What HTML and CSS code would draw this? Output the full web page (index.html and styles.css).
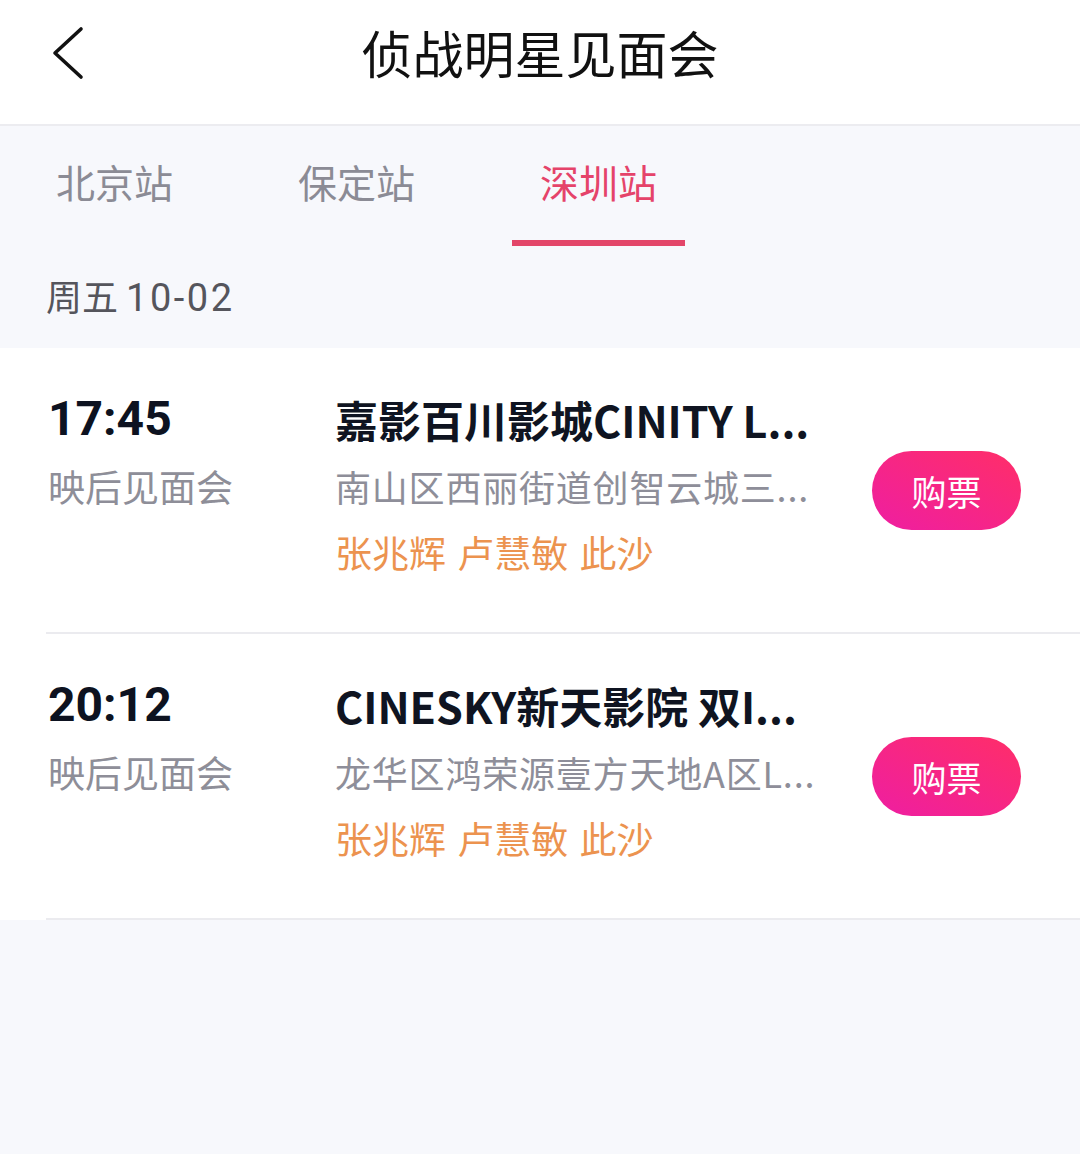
FILE: index.html
```html
<!DOCTYPE html>
<html lang="zh-CN">
<head>
<meta charset="utf-8">
<title>侦战明星见面会</title>
<link rel="stylesheet" href="styles.css">
</head>
<body>
<header class="header">
  <span class="back">
    <svg width="40" height="56" viewBox="0 0 40 56"><polyline points="31,3 5,27 31,51" fill="none" stroke="#111" stroke-width="3.6" stroke-linecap="round" stroke-linejoin="round"/></svg>
  </span>
  <h1 class="title">侦战明星见面会</h1>
</header>
<section class="top">
  <nav class="tabs">
    <div class="tab"><span class="tab-text">北京站</span><span class="tab-bar"></span></div>
    <div class="tab"><span class="tab-text">保定站</span><span class="tab-bar"></span></div>
    <div class="tab active"><span class="tab-text">深圳站</span><span class="tab-bar"></span></div>
  </nav>
  <div class="date">周五 <span class="date-num">10-02</span></div>
</section>
<main class="list">
  <div class="row">
    <div class="left">
      <div class="time">17:45</div>
      <div class="kind">映后见面会</div>
    </div>
    <div class="info">
      <div class="name">嘉影百川影城CINITY L...</div>
      <div class="addr">南山区西丽街道创智云城三...</div>
      <div class="stars">张兆辉 卢慧敏 此沙</div>
    </div>
    <div class="btn">购票</div>
  </div>
  <div class="row">
    <div class="left">
      <div class="time">20:12</div>
      <div class="kind">映后见面会</div>
    </div>
    <div class="info">
      <div class="name">CINESKY新天影院 双I...</div>
      <div class="addr">龙华区鸿荣源壹方天地A区L...</div>
      <div class="stars">张兆辉 卢慧敏 此沙</div>
    </div>
    <div class="btn">购票</div>
  </div>
</main>
</body>
</html>
```
FILE: styles.css
```css
* { box-sizing: border-box; }
html, body {
  margin: 0;
  padding: 0;
  background: #f7f8fc;
  font-family: "Noto Sans CJK SC", "Noto Sans", sans-serif;
}
body { width: 1080px; min-height: 1154px; }

.header {
  position: relative;
  background: #fff;
  height: 126px;
  padding-bottom: 18px;
  border-bottom: 2px solid #ececf0;
}
.back {
  position: absolute;
  left: 50px;
  top: 26px;
  width: 40px;
  height: 56px;
  display: block;
}
.back svg { display: block; }
.title {
  margin: 0;
  text-align: center;
  font-size: 51px;
  font-weight: 400;
  line-height: 104px;
  color: #111;
}

.top {
  padding: 15px 0 22px 0;
}
.tabs {
  display: flex;
  gap: 69px;
  padding-left: 28px;
}
.tab {
  width: 173px;
  display: flex;
  flex-direction: column;
  align-items: center;
}
.tab-text {
  font-size: 39px;
  line-height: 80px;
  color: #8b8b95;
}
.tab-bar {
  display: block;
  width: 173px;
  height: 6px;
  margin-top: 19px;
  background: transparent;
}
.tab.active .tab-text { color: #e5436a; }
.tab.active .tab-bar { background: #e34669; }

.date {
  margin-top: 20px;
  padding-left: 46px;
  height: 60px;
  font-size: 36px;
  line-height: 58px;
  color: #55555c;
}
.date-num {
  font-family: Roboto, "Noto Sans", sans-serif;
  font-size: 38px;
  line-height: 1;
  letter-spacing: 2.5px;
}

.list {
  background: #fff;
}
.row {
  display: flex;
  margin-left: 46px;
  padding: 37px 0 47px 2px;
  border-bottom: 2px solid #ebebef;
}
.left {
  width: 287px;
  flex: none;
}
.time {
  font-family: Roboto, "Noto Sans", sans-serif;
  font-weight: 700;
  font-size: 48px;
  line-height: 68px;
  color: #0d1220;
}
.kind {
  font-size: 37px;
  line-height: 66px;
  color: #8e8e98;
}
.info {
  width: 480px;
  flex: none;
  overflow: hidden;
}
.name, .addr, .stars {
  white-space: nowrap;
  overflow: hidden;
}
.name {
  font-size: 43px;
  font-weight: 700;
  line-height: 68px;
  color: #0f1421;
}
.addr {
  font-size: 36px;
  letter-spacing: 0.8px;
  line-height: 66px;
  color: #8e8e99;
}
.stars {
  font-size: 37px;
  line-height: 66px;
  color: #ec934f;
  font-weight: 400;
  word-spacing: 3px;
}
.btn {
  flex: none;
  margin-left: 57px;
  margin-top: 66px;
  width: 149px;
  height: 79px;
  border-radius: 40px;
  background: linear-gradient(to top right, #ee1ea2, #ff2e68);
  color: #fff;
  font-size: 35px;
  font-weight: 400;
  line-height: 79px;
  text-align: center;
}
```
